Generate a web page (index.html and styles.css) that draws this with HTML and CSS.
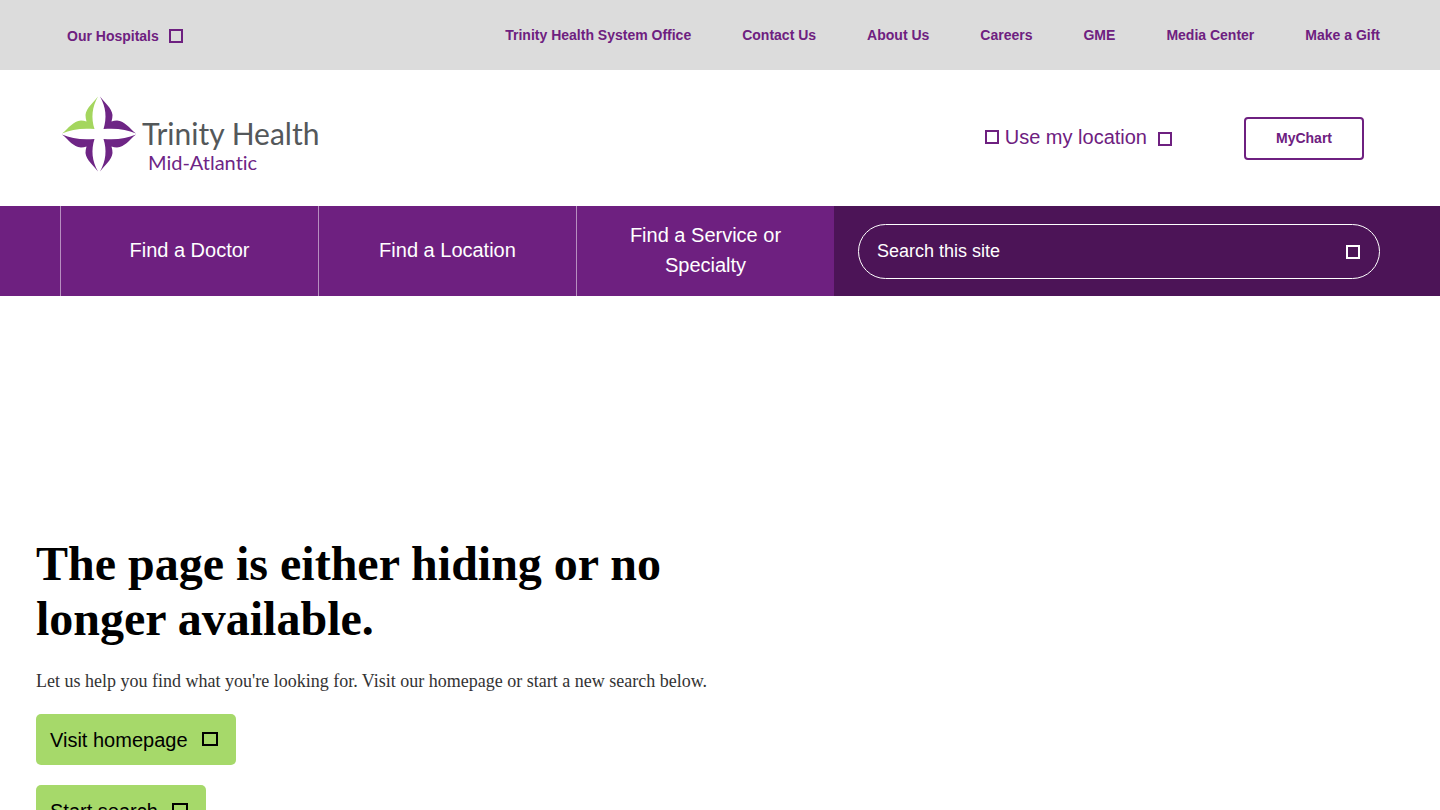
FILE: index.html
```html
<!DOCTYPE html>
<html lang="en">
<head>
<meta charset="utf-8">
<title>Page not found | Trinity Health Mid-Atlantic</title>
<link rel="stylesheet" href="styles.css">
</head>
<body>
	<div class="top-bar">
		<button type="button" class="hospitals">Our Hospitals <span class="box"></span></button>
		<nav class="top-links">
			<a href="#">Trinity Health System Office</a>
			<a href="#">Contact Us</a>
			<a href="#">About Us</a>
			<a href="#">Careers</a>
			<a href="#">GME</a>
			<a href="#">Media Center</a>
			<a href="#">Make a Gift</a>
		</nav>
	</div>

	<header class="header">
		<a href="#" class="logo">
			<svg class="logo-mark" viewBox="0 0 76 76" aria-hidden="true">
				<defs>
					<path id="petal" d="M37 0.5C33 6 25 12 24.5 19Q24.5 22 25.500 25.500Q23 24.500 20 24.500C12 25 8 32 1 37.500C10 33.500 20 32 33.500 33C30 22 31 11 37 0.500Z"/>
				</defs>
				<use href="#petal" class="green"/>
				<use href="#petal" class="purple" transform="matrix(-1 0 0 1 76 0)"/>
				<use href="#petal" class="purple" transform="matrix(1 0 0 -1 0 76)"/>
				<use href="#petal" class="purple" transform="matrix(-1 0 0 -1 76 76)"/>
			</svg>
			<span class="logo-text">
				<span class="logo-name">Trinity Health</span>
				<span class="logo-region">Mid-Atlantic</span>
			</span>
		</a>
		<div class="header-tools">
			<button type="button" class="location"><span class="box"></span> Use my location <span class="box box-end"></span></button>
			<a href="#" class="mychart">MyChart</a>
		</div>
	</header>

	<div class="main-nav">
		<a href="#" class="tab">Find a Doctor</a>
		<a href="#" class="tab">Find a Location</a>
		<a href="#" class="tab">Find a Service or Specialty</a>
		<form class="search">
			<div class="search-field">
				<input type="text" placeholder="Search this site" aria-label="Search this site">
				<button type="button" aria-label="Search"><span class="box"></span></button>
			</div>
		</form>
	</div>

	<main class="content">
		<h1>The page is either hiding or no longer available.</h1>
		<p>Let us help you find what you're looking for. Visit our homepage or start a new search below.</p>
		<a href="#" class="btn">Visit homepage <span class="box"></span></a>
		<a href="#" class="btn">Start search <span class="box"></span></a>
	</main>
</body>
</html>
```
FILE: styles.css
```css
*{
	box-sizing: border-box;
}

body{
	margin: 0;
	font-family: "Liberation Sans", Arial, sans-serif;
	background-color: white;
	color: black;
}

a{
	text-decoration: none;
}

button{
	padding: 0;
	border: none;
	background: none;
	font-family: inherit;
	cursor: pointer;
}

.box{
	display: inline-block;
	flex: none;
	width: 14px;
	height: 14px;
	border: 2px solid currentColor;
}

/* top bar */
.top-bar{
	display: flex;
	justify-content: space-between;
	align-items: center;
	height: 70px;
	padding: 0 60px 0 67px;
	background-color: #dcdcdc;
}

.hospitals{
	display: flex;
	align-items: center;
	gap: 10px;
	padding-top: 2px;
	font-size: 14px;
	font-weight: bold;
	color: #6e2080;
}

.top-links{
	display: flex;
	gap: 51px;
}

.top-links a{
	font-size: 14px;
	font-weight: bold;
	color: #6e2080;
}

/* header */
.header{
	display: flex;
	justify-content: space-between;
	height: 136px;
	padding: 26px 76px 0 61px;
}

.logo{
	display: flex;
	align-items: flex-start;
	gap: 5px;
}

.logo-mark{
	width: 76px;
	height: 76px;
}

.green{
	fill: #a4d65e;
}

.purple{
	fill: #6e2585;
}

.logo-text{
	display: flex;
	flex-direction: column;
	padding-top: 19px;
	font-family: Lato, sans-serif;
	font-variant-ligatures: none;
}

.logo-name{
	font-size: 30px;
	line-height: 36px;
	color: #54585a;
}

.logo-region{
	padding-left: 6px;
	font-size: 20px;
	line-height: 22px;
	color: #6e2585;
}

.header-tools{
	display: flex;
	align-items: center;
	gap: 72px;
	height: 84px;
}

.location{
	display: flex;
	align-items: center;
	gap: 6px;
	padding-bottom: 2px;
	font-size: 20px;
	color: #6e2080;
}

.box-end{
	margin: 4px 0 0 5px;
}

.mychart{
	width: 120px;
	padding: 12px 0;
	border: 2px solid #6e2080;
	border-radius: 4px;
	font-size: 14px;
	line-height: 15px;
	font-weight: bold;
	text-align: center;
	color: #6e2080;
}

/* purple navigation */
.main-nav{
	display: grid;
	grid-template-columns: 43fr 43fr 43fr 101fr;
	min-height: 90px;
	padding-left: 60px;
	background-color: #6e2080;
}

.tab{
	display: flex;
	justify-content: center;
	align-items: center;
	padding: 0 40px 2px;
	border-left: 1px solid #b78fc0;
	font-size: 20px;
	line-height: 30px;
	text-align: center;
	color: white;
}

.search{
	display: flex;
	align-items: center;
	padding: 0 60px 0 24px;
	background-color: #4c1457;
}

.search-field{
	display: flex;
	flex: 1;
	align-items: center;
	height: 55px;
	padding: 1px 19px 0 18px;
	border: 1px solid white;
	border-radius: 28px;
}

.search-field input{
	flex: 1;
	min-width: 0;
	padding: 0;
	border: none;
	outline: none;
	background: none;
	font-family: inherit;
	font-size: 18px;
	color: white;
}

.search-field input::placeholder{
	color: white;
	opacity: 1;
}

.search-field button{
	display: flex;
	color: white;
}

/* error message */
.content{
	display: flex;
	flex-direction: column;
	align-items: flex-start;
	width: 50%;
	padding: 240px 0 60px 36px;
}

.content h1{
	margin: 0 0 20px;
	font-family: "Liberation Serif", "Times New Roman", serif;
	font-size: 48px;
	line-height: 55px;
}

.content p{
	margin: 0 0 18px;
	font-family: "Liberation Serif", "Times New Roman", serif;
	font-size: 18px;
	line-height: 30px;
	color: #333;
}

.btn{
	display: flex;
	align-items: center;
	gap: 14px;
	margin-bottom: 20px;
	padding: 2px 18px 0 14px;
	border-radius: 5px;
	background-color: #a6d96a;
	font-size: 20px;
	line-height: 49px;
	color: black;
}

.btn .box{
	width: 16px;
	margin-bottom: 4px;
}
```
